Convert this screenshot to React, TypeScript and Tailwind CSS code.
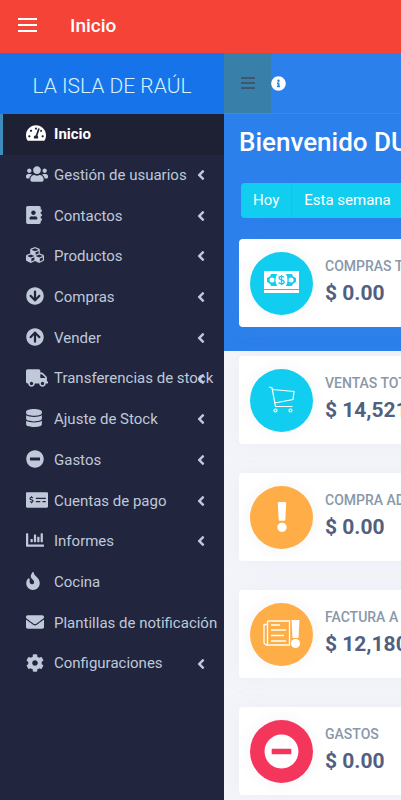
import type { ReactNode } from 'react'
import type { IconType } from 'react-icons'
import {
  FaAddressBook,
  FaAngleLeft,
  FaArrowCircleDown,
  FaArrowCircleUp,
  FaChartBar,
  FaCog,
  FaCubes,
  FaDatabase,
  FaEnvelope,
  FaExclamation,
  FaFire,
  FaInfoCircle,
  FaMinusCircle,
  FaMoneyCheckAlt,
  FaTachometerAlt,
  FaTruck,
  FaUsers,
} from 'react-icons/fa'

interface MenuItem {
  label: string
  icon: IconType
  iconWidth: string
  hasChildren?: boolean
  active?: boolean
}

const menu: MenuItem[] = [
  { label: 'Inicio', icon: FaTachometerAlt, iconWidth: 'w-5', active: true },
  { label: 'Gestión de usuarios', icon: FaUsers, iconWidth: 'w-[22px]', hasChildren: true },
  { label: 'Contactos', icon: FaAddressBook, iconWidth: 'w-4', hasChildren: true },
  { label: 'Productos', icon: FaCubes, iconWidth: 'w-[18px]', hasChildren: true },
  { label: 'Compras', icon: FaArrowCircleDown, iconWidth: 'w-[18px]', hasChildren: true },
  { label: 'Vender', icon: FaArrowCircleUp, iconWidth: 'w-[18px]', hasChildren: true },
  { label: 'Transferencias de stock', icon: FaTruck, iconWidth: 'w-[22px]', hasChildren: true },
  { label: 'Ajuste de Stock', icon: FaDatabase, iconWidth: 'w-4', hasChildren: true },
  { label: 'Gastos', icon: FaMinusCircle, iconWidth: 'w-[18px]', hasChildren: true },
  { label: 'Cuentas de pago', icon: FaMoneyCheckAlt, iconWidth: 'w-[22px]', hasChildren: true },
  { label: 'Informes', icon: FaChartBar, iconWidth: 'w-[18px]', hasChildren: true },
  { label: 'Cocina', icon: FaFire, iconWidth: 'w-[14px]' },
  { label: 'Plantillas de notificación', icon: FaEnvelope, iconWidth: 'w-[18px]' },
  { label: 'Configuraciones', icon: FaCog, iconWidth: 'w-[18px]', hasChildren: true },
]

function CashIcon() {
  return (
    <svg width="36" height="24" viewBox="0 0 36 24" aria-hidden="true">
      <path fill="#fff" d="M0 0h35v18H0zM0 19h35v3H0z" />
      <path
        fill="#11cdef"
        d="M7 3h6c-2 4-2 8 0 12H7c0-2-2-3-4-4V7c2-1 4-2 4-4zM28 3h-6c2 4 2 8 0 12h6c0-2 2-3 4-4V7c-2-1-4-2-4-4z"
      />
      <circle cx="8" cy="9" r="2.5" fill="#fff" />
      <circle cx="27" cy="9" r="2.5" fill="#fff" />
      <path
        d="M20 6.500c-.5-.9-1.400-1.200-2.500-1.200-1.500 0-2.500.7-2.500 1.800 0 2.600 5.200 1.200 5.200 3.800 0 1.200-1.100 1.900-2.700 1.900-1.300 0-2.300-.4-2.800-1.400M17.500 4v10"
        fill="none"
        stroke="#11cdef"
        strokeWidth="1.300"
      />
    </svg>
  )
}

function CartIcon() {
  return (
    <svg width="28" height="28" viewBox="0 0 28 28" fill="none" stroke="#fff" strokeWidth="1.200" aria-hidden="true">
      <path d="M1 1l3 .8L7.500 20.500h17M4.500 3.500L26 5.500l-1 8L6.500 17" />
      <circle cx="7.500" cy="24.500" r="1.500" />
      <circle cx="22.500" cy="24.500" r="1.500" />
    </svg>
  )
}

function InvoiceIcon() {
  return (
    <svg width="38" height="30" viewBox="0 0 38 30" fill="none" stroke="#fff" strokeWidth="1.300" aria-hidden="true">
      <path d="M4.500 2h22v24H4a3 3 0 0 1-3-3V5.500h3.500M4.500 2v21.500c0 1.500-.8 2.500-1.500 2.500" />
      <path d="M8 6h9M8 11h15M8 16.500h13M8 22h15" />
      <path fill="#fff" stroke="none" d="M28.500 1h8l-1 18h-6z" />
      <circle cx="32.500" cy="24.500" r="4.500" fill="#fff" stroke="none" />
    </svg>
  )
}

interface StatCardProps {
  label: string
  value: string
  tone: 'info' | 'warning' | 'danger'
  children: ReactNode
}

const tones = {
  info: 'bg-[#11cdef]',
  warning: 'bg-[#ffad46]',
  danger: 'bg-[#f5365c]',
}

function StatCard({ label, value, tone, children }: StatCardProps) {
  return (
    <section className="flex h-[88px] w-[300px] items-center gap-3 rounded bg-white pl-[11px] shadow-[0_0_24px_rgba(136,152,170,0.08)]">
      <div
        className={`flex size-[63px] shrink-0 items-center justify-center rounded-full text-white shadow-[0_0_16px_rgba(50,50,93,0.06)] ${tones[tone]}`}
      >
        {children}
      </div>
      <div className="whitespace-nowrap">
        <h2 className="text-sm leading-5 font-medium text-[#8898aa]">{label}</h2>
        <p className="text-[21px] leading-[34px] font-bold text-[#525f7f]">{value}</p>
      </div>
    </section>
  )
}

function Sidebar() {
  return (
    <aside className="w-[224px] shrink-0 bg-[#21253e]">
      <a
        href="#"
        className="flex h-[61px] items-center justify-center bg-[#1773ea] pt-[6px] text-[21px] font-light text-[#d6f4ff]"
      >
        LA ISLA DE RAÚL
      </a>
      <nav>
        <ul className="grid h-[570px] auto-rows-fr grid-cols-1 text-[15px]">
          {menu.map(({ label, icon: Icon, iconWidth, hasChildren, active }) => (
            <li key={label}>
              <a
                href="#"
                className={
                  active
                    ? 'relative flex h-full items-center border-l-3 border-[#3c8dbc] bg-[#1e2134] pl-[23px] font-bold text-white'
                    : 'relative flex h-full items-center border-l-3 border-transparent pl-[23px] text-[#bfc9d9]'
                }
              >
                <span className="w-7 shrink-0 pb-[2px]">
                  <Icon className={`h-[18px] ${iconWidth}`} />
                </span>
                <span className="whitespace-nowrap">{label}</span>
                {hasChildren && <FaAngleLeft size={16} className="absolute right-[15px]" />}
              </a>
            </li>
          ))}
        </ul>
      </nav>
    </aside>
  )
}

export default function App() {
  return (
    <div className="flex min-h-screen flex-col overflow-hidden bg-[#f4f5fb] font-[Roboto,sans-serif] text-base">
      <header className="flex h-[53px] items-center bg-[#f54337] pl-[18px] text-white">
        <button type="button" aria-label="Menú" className="flex w-[52px] flex-col gap-1 pb-[3px]">
          <span className="h-[2px] w-[19px] bg-white" />
          <span className="h-[2px] w-[19px] bg-white" />
          <span className="h-[2px] w-[19px] bg-white" />
        </button>
        <h1 className="text-[19px] font-medium">Inicio</h1>
      </header>

      <div className="flex grow">
        <Sidebar />
        <main className="min-w-0 grow overflow-hidden">
          <div className="bg-[#2c80ec] pb-6">
            <div className="flex h-[61px] items-center border-b border-[#3988ee]">
              <button
                type="button"
                aria-label="Contraer menú"
                className="flex h-full w-[47px] flex-col items-center justify-center gap-[3px] bg-[#3880aa]"
              >
                <span className="h-[2px] w-[14px] bg-[#40576b]" />
                <span className="h-[2px] w-[14px] bg-[#40576b]" />
                <span className="h-[2px] w-[14px] bg-[#40576b]" />
              </button>
              <button type="button" aria-label="Información" className="text-white">
                <FaInfoCircle size={15} />
              </button>
            </div>
            <div className="pl-[15px]">
              <h2 className="pt-3 text-[26px] leading-8 font-medium whitespace-nowrap text-white">Bienvenido DU</h2>
              <div className="mt-[25px] mb-[21px] ml-[2px] flex h-[35px] w-[300px] rounded bg-[#11cdef] text-[15px] text-white">
                <button type="button" className="border-r border-[#1cbfe6] px-3">
                  Hoy
                </button>
                <button type="button" className="px-3 whitespace-nowrap">
                  Esta semana
                </button>
              </div>
              <StatCard label="COMPRAS T" value="$ 0.00" tone="info">
                <CashIcon />
              </StatCard>
            </div>
          </div>

          <div className="flex flex-col gap-[29px] pt-[5px] pl-[15px]">
            <StatCard label="VENTAS TOT" value="$ 14,521" tone="info">
              <CartIcon />
            </StatCard>
            <StatCard label="COMPRA AD" value="$ 0.00" tone="warning">
              <FaExclamation size={30} />
            </StatCard>
            <StatCard label="FACTURA A" value="$ 12,180" tone="warning">
              <InvoiceIcon />
            </StatCard>
            <StatCard label="GASTOS" value="$ 0.00" tone="danger">
              <FaMinusCircle size={35} />
            </StatCard>
          </div>
        </main>
      </div>
    </div>
  )
}
